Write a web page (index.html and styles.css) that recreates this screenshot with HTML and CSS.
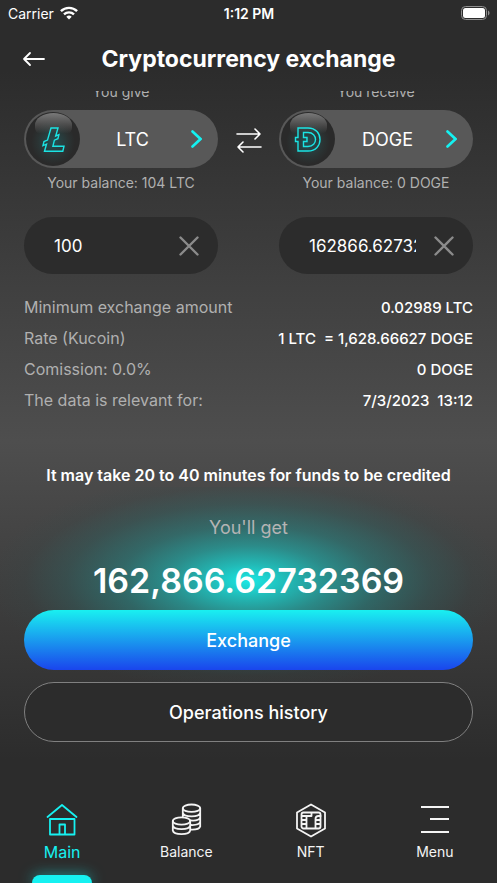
FILE: index.html
```html
<!DOCTYPE html>
<html lang="en">
<head>
<meta charset="utf-8">
<meta name="viewport" content="width=device-width, initial-scale=1">
<title>Cryptocurrency exchange</title>
<link rel="stylesheet" href="styles.css">
</head>
<body>
<div class="app">
  <div class="status">
    <span class="status-left">Carrier
      <svg width="18" height="14" viewBox="0 0 18 14" aria-hidden="true"><g fill="none" stroke="#fff" stroke-width="2.4"><path d="M.9 5.2a11.6 11.6 0 0 1 16.2 0"/><path d="M4 8.400a7.200 7.200 0 0 1 10 0"/></g><path d="M6.300 10.700a4 4 0 0 1 5.400 0L9 13.500z" fill="#fff"/></svg>
    </span>
    <span class="status-time">1:12 PM</span>
    <svg class="battery" width="29" height="14" viewBox="0 0 29 14" aria-hidden="true"><rect x=".5" y=".5" width="25" height="13" rx="4" fill="none" stroke="#8f8f8f"/><rect x="2" y="2" width="22" height="10" rx="2.5" fill="#fff"/><path d="M27 4.500c2 .8 2 4.200 0 5z" fill="#8f8f8f"/></svg>
  </div>

  <header class="header">
    <button class="back" type="button" aria-label="Back"><svg width="24" height="16" viewBox="0 0 24 16"><path d="M22 8H2M8 2 2 8l6 6" fill="none" stroke="#fff" stroke-width="1.8" stroke-linecap="round" stroke-linejoin="round"/></svg></button>
    <h1>Cryptocurrency exchange</h1>
  </header>

  <main class="content">
    <div class="pair">
      <section class="side">
        <p class="caption">You give</p>
        <button class="coin" type="button">
          <span class="orb"><svg width="34" height="34" viewBox="0 0 34 34"><path d="M15 6h7l-2.300 8 3.200-1.300-1 4-3.500 1.500-1.500 6H28l-1.200 5H8.500l2-7-3.500 1.400 1-4 3.500-1.500z"/></svg></span>
          <span class="code">LTC</span>
          <svg class="chevron" width="11" height="18" viewBox="0 0 11 18"><path d="m1.500 1.500 8 7.500-8 7.500"/></svg>
        </button>
        <p class="balance">Your balance: 104 LTC</p>
      </section>
      <button class="swap" type="button" aria-label="Swap"><svg width="26" height="26" viewBox="0 0 26 26"><path d="M1 7h23M19 2l5 5-5 5M25 20H2M7 15l-5 5 5 5"/></svg></button>
      <section class="side">
        <p class="caption">You receive</p>
        <button class="coin" type="button">
          <span class="orb"><svg width="34" height="34" viewBox="0 0 34 34"><path d="M7 6h10c16 0 16 23 0 23H7v-9.500H4.500v-4H7zM12.500 10.500H17c10 0 10 14 0 14h-4.500v-5H16v-4h-3.500z"/></svg></span>
          <span class="code">DOGE</span>
          <svg class="chevron" width="11" height="18" viewBox="0 0 11 18"><path d="m1.500 1.500 8 7.500-8 7.500"/></svg>
        </button>
        <p class="balance">Your balance: 0 DOGE</p>
      </section>
    </div>

    <div class="amounts">
      <div class="amount"><input type="text" value="100" aria-label="Amount you give"><button type="button" aria-label="Clear amount you give"><svg width="20" height="20" viewBox="0 0 20 20"><path d="m1.500 1.500 17 17m0-17-17 17"/></svg></button></div>
      <div class="amount"><input type="text" value="162866.62732369" aria-label="Amount you receive"><button type="button" aria-label="Clear amount you receive"><svg width="20" height="20" viewBox="0 0 20 20"><path d="m1.500 1.500 17 17m0-17-17 17"/></svg></button></div>
    </div>

    <dl class="details">
      <div><dt>Minimum exchange amount</dt><dd>0.02989 LTC</dd></div>
      <div><dt>Rate (Kucoin)</dt><dd>1 LTC&nbsp; = 1,628.66627 DOGE</dd></div>
      <div><dt>Comission: 0.0%</dt><dd>0 DOGE</dd></div>
      <div><dt>The data is relevant for:</dt><dd>7/3/2023&nbsp; 13:12</dd></div>
    </dl>

    <p class="notice">It may take 20 to 40 minutes for funds to be credited</p>
    <div class="outcome">
      <p class="result-label">You'll get</p>
      <p class="result-value">162,866.62732369</p>
      <div class="actions">
        <button class="primary" type="button">Exchange</button>
        <button class="secondary" type="button">Operations history</button>
      </div>
    </div>
  </main>

  <nav class="tabs">
    <a class="tab active" href="#main"><svg width="34" height="36" viewBox="0 0 34 36"><path d="M2.500 15 17 3l14.500 12M5 17h24.500v15.500H5zM14.500 32V22.500h5.500V32"/></svg><span>Main</span></a>
    <a class="tab" href="#balance"><svg width="34" height="36" viewBox="0 0 34 36"><ellipse cx="22.500" cy="6.200" rx="8.700" ry="3.700"/><path d="M13.800 6.200v4.500c1 4.800 16.400 4.800 17.400 0V6.200M31.200 10.700v4.500c-.8 2.500-5 3.700-10 3.200M31.200 15.200v4.600c-.8 2.300-4.800 3.400-9.200 3.200M31.200 19.800v4.600c-.8 2.300-4.800 3.400-9.200 3.200M13.800 10.700v3.800"/><ellipse cx="12.500" cy="19" rx="8.700" ry="3.700"/><path d="M3.800 19v4.500c1 4.800 16.400 4.800 17.400 0V19M3.800 23.500v5c1 4.800 16.400 4.800 17.400 0v-5"/></svg><span>Balance</span></a>
    <a class="tab" href="#nft"><svg width="34" height="36" viewBox="0 0 34 36"><path d="m17 2.500 14 8v16l-14 8-14-8v-16z"/><rect x="7.500" y="10.500" width="19" height="16" rx="2"/><path d="M12.500 14v12M21.500 26V17q0-3 3-3h2M8 14h9.500v-3M8 18h4.500M8 22h4.500M21.500 18H26M21.500 22H26"/></svg><span>NFT</span></a>
    <a class="tab" href="#menu"><svg width="34" height="36" viewBox="0 0 34 36"><path class="rule" d="M3 5h28M12 17h19M3 30h28"/></svg><span>Menu</span></a>
  </nav>
</div>
</body>
</html>
```
FILE: styles.css
```css
* { box-sizing: border-box; }
body { margin: 0; background: #2c2c2c; color: #fff; font-family: Inter, "Open Sans", sans-serif; }
h1, p, dl, dd { margin: 0; }
button { padding: 0; border: 0; background: none; color: inherit; font: inherit; cursor: pointer; }
svg { display: block; flex: none; }

.app {
  display: flex;
  flex-direction: column;
  min-height: 100vh;
  overflow: hidden;
  background: linear-gradient(#2c2c2c 8%, #4e4e4e 50%, #2c2c2c 86%);
}

.status {
  display: grid;
  grid-template-columns: 1fr auto 1fr;
  align-items: center;
  height: 26px;
  padding: 0 7px 0 8px;
  font-size: 14px;
}
.status-left { display: flex; align-items: center; gap: 6px; }
.status-time { font-weight: 600; }
.battery { justify-self: end; }

.header {
  display: grid;
  grid-template-columns: 24px 1fr 24px;
  align-items: center;
  height: 65px;
  padding: 0 22px;
}
.header h1 { text-align: center; font-size: 23px; line-height: 32px; font-weight: 700; white-space: nowrap; }

.content { overflow: hidden; padding: 0 24px; }
.pair { display: flex; justify-content: space-between; }
.side { width: 194px; text-align: center; color: #b0b0b0; }
.caption { margin-top: -9px; font-size: 14px; line-height: 20px; }
.coin {
  display: flex;
  align-items: center;
  width: 100%;
  height: 58px;
  margin-top: 8px;
  padding: 0 16px 0 2px;
  border-radius: 29px;
  background: #585858;
  color: #fff;
}
.orb {
  position: relative;
  display: grid;
  place-items: center;
  width: 54px;
  height: 54px;
  border-radius: 50%;
  background: radial-gradient(circle at 50% 56%, #235052 0, #2b3333 38%, #2a2a2a 54%);
}
.orb::before {
  content: "";
  position: absolute;
  top: 1px;
  left: 9px;
  width: 37px;
  height: 24px;
  border-radius: 50% 50% 40% 40%;
  background: linear-gradient(#797979, rgba(60, 60, 60, 0) 85%);
}
.orb svg { position: relative; fill: none; stroke: #1be4e4; stroke-width: 1.4; }
.code { flex: 1; padding-right: 6px; font-size: 18px; }
.chevron { fill: none; stroke: #14f1f1; stroke-width: 2.6; stroke-linecap: round; }
.balance { margin-top: 5px; font-size: 14px; line-height: 20px; white-space: nowrap; }
.swap { align-self: flex-start; margin-top: 36px; }
.swap svg { fill: none; stroke: #fff; stroke-width: 1.6; stroke-linecap: round; stroke-linejoin: round; }

.amounts { display: flex; justify-content: space-between; margin-top: 24px; }
.amount {
  display: flex;
  align-items: center;
  justify-content: space-between;
  width: 194px;
  height: 57px;
  padding: 0 19px 0 30px;
  border-radius: 29px;
  background: #2c2c2c;
}
.amount input {
  width: 107px;
  padding: 0;
  border: 0;
  outline: 0;
  background: none;
  color: #fff;
  font: 17px Inter, sans-serif;
}
.amount svg { fill: none; stroke: #8b8b8b; stroke-width: 2.4; stroke-linecap: round; }

.details { margin-top: 18px; }
.details div { display: flex; justify-content: space-between; font-size: 16px; line-height: 31px; white-space: nowrap; }
.details dt { color: #b0b0b0; }
.details dd { font-size: 15px; font-weight: 500; }

.notice { margin-top: 47px; text-align: center; font-size: 16px; line-height: 24px; font-weight: 600; white-space: nowrap; }
.outcome {
  margin: 0 -24px;
  padding: 26px 24px 0;
  text-align: center;
  background: radial-gradient(ellipse 260px 110px at 50% 94px, #1ae8e4 0, rgba(29, 205, 201, .86) 15%, rgba(34, 170, 167, .7) 32%, rgba(38, 135, 133, .55) 50%, rgba(45, 100, 99, .4) 70%, rgba(50, 75, 75, .18) 86%, rgba(60, 66, 66, 0) 100%);
}
.result-label { color: #b4b4b4; font-size: 18px; line-height: 30px; }
.result-value { padding-top: 14px; font-size: 34px; line-height: 48px; font-weight: 600; }
.actions { display: grid; gap: 12px; margin-top: 5px; }
.actions button { height: 60px; border-radius: 30px; font-size: 18px; font-weight: 500; }
.primary { background: linear-gradient(#19f0f0, #1a45ed); }
.actions .secondary { border: 1px solid #808080; background: #2c2c2c; }

.tabs { display: grid; grid-template-columns: repeat(4, 1fr); height: 81px; margin-top: auto; }
.tab { position: relative; display: flex; flex-direction: column; align-items: center; color: #f4f4f4; font-size: 14px; line-height: 24px; text-decoration: none; }
.tab svg { margin-bottom: 2px; fill: none; stroke: currentColor; stroke-width: 1.8; stroke-linejoin: round; stroke-linecap: round; }
.tab .rule { stroke-width: 2; stroke-linecap: butt; }
.tab.active { color: #16f1f1; font-size: 16px; }
.tab.active::after {
  content: "";
  position: absolute;
  bottom: 0;
  width: 60px;
  height: 8px;
  border-radius: 8px 8px 0 0;
  background: #16f1f1;
  box-shadow: 0 0 14px rgba(22, 241, 241, .6);
}
```
